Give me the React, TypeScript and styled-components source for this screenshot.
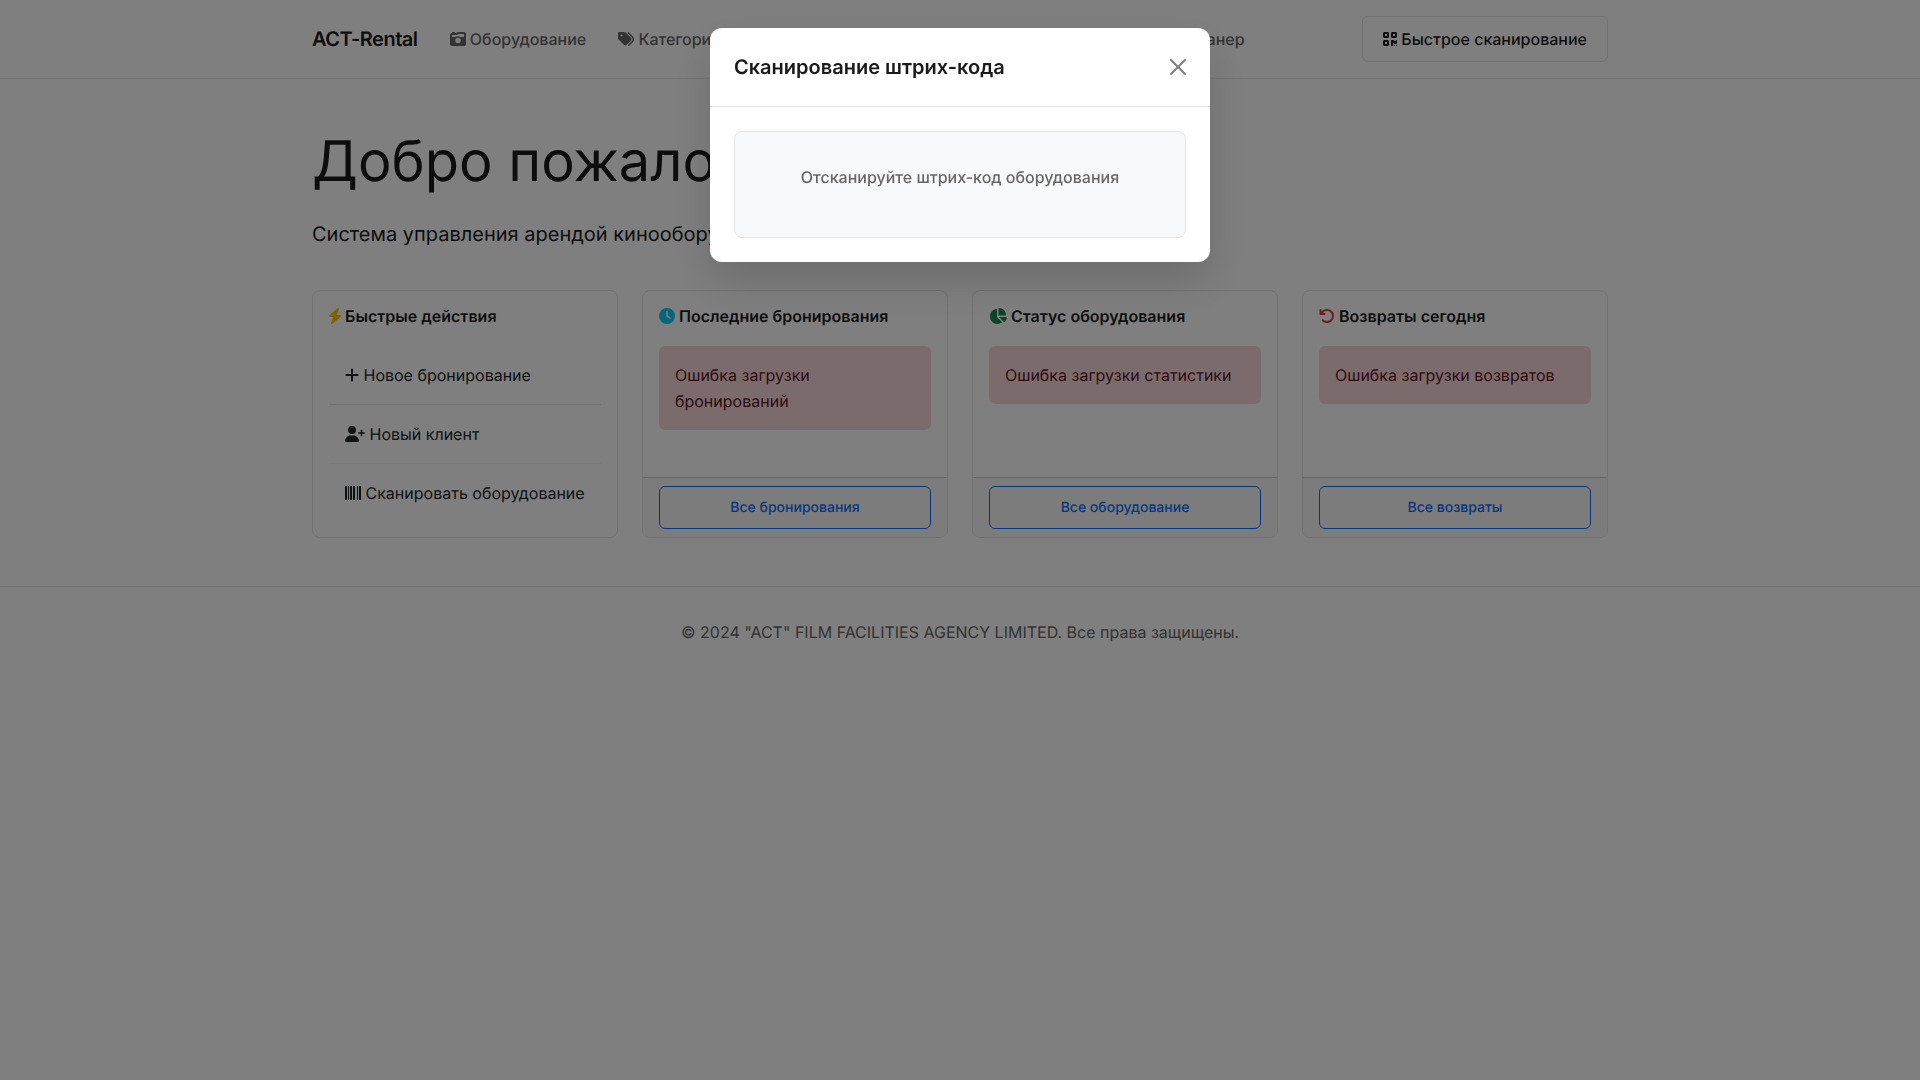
import React from "react";
import styled, { createGlobalStyle } from "styled-components";
import {
  FaArrowRotateLeft,
  FaBarcode,
  FaBolt,
  FaCalendar,
  FaCameraRetro,
  FaChartPie,
  FaClock,
  FaFolder,
  FaPlus,
  FaQrcode,
  FaTags,
  FaUserPlus,
  FaUsers,
} from "react-icons/fa6";
import type { IconType } from "react-icons";

const GlobalStyle = createGlobalStyle`
  *, *::before, *::after { box-sizing: border-box; }
  body {
    margin: 0;
    background: #fff;
    color: #1a1a1a;
    font-family: Inter, "Noto Sans", sans-serif;
    font-size: 16px;
    line-height: 26px;
    text-rendering: geometricPrecision;
    -webkit-font-smoothing: antialiased;
  }
  h1, h2, p { margin: 0; }
  a { color: inherit; text-decoration: none; }
  button { font: inherit; color: inherit; cursor: pointer; text-rendering: inherit; }
`;

const Glyph = styled.span<{ $width: number; $color?: string }>`
  color: ${(p) => p.$color ?? "inherit"};
  svg {
    width: ${(p) => p.$width}px;
    height: 16px;
    vertical-align: -2px;
  }
`;

const Container = styled.div`
  width: 100%;
  max-width: 1320px;
  margin: 0 auto;
  padding: 0 12px;
`;

const Navbar = styled.header`
  padding: 16px 0;
  border-bottom: 1px solid #e5e5e5;
`;

const NavRow = styled(Container)`
  display: flex;
  align-items: center;
`;

const Brand = styled.a`
  margin-right: 16px;
  font-size: 20px;
  font-weight: 600;
  letter-spacing: -0.5px;
`;

const NavList = styled.nav`
  display: flex;
  flex: 1;
`;

const NavLink = styled.a`
  padding: 8px 16px;
  color: #666;
  font-weight: 500;
  white-space: nowrap;
`;

const ScanButton = styled.button`
  padding: 9px 20px;
  border: 1px solid #e5e5e5;
  border-radius: 6px;
  background: transparent;
  font-weight: 500;
  white-space: nowrap;
`;

const Main = styled(Container).attrs({ as: "main" })`
  padding-top: 48px;
  padding-bottom: 48px;
`;

const Title = styled.h1`
  margin-bottom: 22px;
  font-size: 56px;
  font-weight: 400;
  line-height: 69px;
`;

const Lead = styled.p`
  margin-bottom: 40px;
  font-size: 20px;
  line-height: 32px;
`;

const Cards = styled.div`
  display: grid;
  grid-template-columns: repeat(4, 1fr);
  gap: 24px;
`;

const Card = styled.section`
  display: flex;
  flex-direction: column;
  border: 1px solid #e5e5e5;
  border-radius: 8px;
  overflow: hidden;
`;

const CardBody = styled.div`
  flex: 1;
  padding: 16px 16px 15px;
`;

const CardTitle = styled.h2`
  margin-bottom: 20px;
  font-size: 16px;
  font-weight: 600;
  line-height: 19px;
`;

const CardFooter = styled.div`
  padding: 8px 16px;
  border-top: 1px solid #cfcfcf;
  background: #f8f8f8;
`;

const OutlineLink = styled.a`
  display: block;
  padding: 9px 16px;
  border: 1px solid #0d6efd;
  border-radius: 6px;
  color: #0d6efd;
  font-size: 14px;
  font-weight: 500;
  line-height: 23px;
  text-align: center;
`;

const Alert = styled.div`
  padding: 16px;
  border-radius: 6px;
  background: #f8d7da;
  color: #58151c;
`;

const ActionLink = styled.a<{ $line?: string }>`
  display: block;
  padding: 16px;
  border-bottom: ${(p) => (p.$line ? `1px solid ${p.$line}` : "none")};
  color: #212529;
  white-space: nowrap;
`;

const Footer = styled.footer`
  padding: 32px 0;
  border-top: 1px solid #e5e5e5;
  color: #666;
  text-align: center;
`;

const Backdrop = styled.div`
  position: fixed;
  inset: 0;
  background: rgba(0, 0, 0, 0.5);
`;

const Dialog = styled.div`
  width: 100%;
  max-width: 500px;
  margin: 28px auto;
  border-radius: 12px;
  background: #fff;
  box-shadow: 0 20px 40px rgba(0, 0, 0, 0.15);
`;

const DialogHeader = styled.div`
  display: flex;
  align-items: center;
  justify-content: space-between;
  padding: 24px;
  border-bottom: 1px solid #e5e5e5;
`;

const DialogTitle = styled.h2`
  font-size: 20px;
  font-weight: 600;
  line-height: 30px;
`;

const CloseButton = styled.button`
  display: flex;
  padding: 0;
  border: 0;
  background: none;
  color: #000;
  opacity: 0.5;
`;

const DialogBody = styled.div`
  padding: 24px;
`;

const ScanBox = styled.div`
  padding: 32px 32px 31px;
  border: 1px solid #e5e5e5;
  border-radius: 8px;
  background: #f8f9fa;
  color: #666;
  font-weight: 500;
  text-align: center;

  p {
    margin-bottom: 16px;
  }
`;

type IconSpec = { shape: IconType; width: number; viewBox?: string };

const icons = {
  bolt: { shape: FaBolt, width: 12, viewBox: "32 0 384 512" },
  plus: { shape: FaPlus, width: 14 },
  qrcode: { shape: FaQrcode, width: 14 },
  calendar: { shape: FaCalendar, width: 14 },
  camera: { shape: FaCameraRetro, width: 16 },
  tags: { shape: FaTags, width: 16 },
  folder: { shape: FaFolder, width: 16 },
  barcode: { shape: FaBarcode, width: 16 },
  clock: { shape: FaClock, width: 16 },
  undo: { shape: FaArrowRotateLeft, width: 16 },
  chart: { shape: FaChartPie, width: 18 },
  users: { shape: FaUsers, width: 20 },
  userPlus: { shape: FaUserPlus, width: 20 },
} satisfies Record<string, IconSpec>;

type IconName = keyof typeof icons;

function Icon({ name, color }: { name: IconName; color?: string }) {
  const { shape: Shape, width, viewBox }: IconSpec = icons[name];
  return (
    <>
      <Glyph $width={width} $color={color} aria-hidden="true">
        {viewBox ? <Shape viewBox={viewBox} /> : <Shape />}
      </Glyph>{" "}
    </>
  );
}

const navItems: { icon: IconName; label: string }[] = [
  { icon: "camera", label: "Оборудование" },
  { icon: "tags", label: "Категории" },
  { icon: "users", label: "Клиенты" },
  { icon: "folder", label: "Проекты" },
  { icon: "calendar", label: "Бронирования" },
  { icon: "barcode", label: "Сканер" },
];

const actions: { icon: IconName; label: string; line?: string }[] = [
  { icon: "plus", label: "Новое бронирование", line: "#dedede" },
  { icon: "userPlus", label: "Новый клиент", line: "#f1f1f1" },
  { icon: "barcode", label: "Сканировать оборудование" },
];

const panels: {
  icon: IconName;
  color: string;
  title: string;
  error: string;
  link: string;
}[] = [
  {
    icon: "clock",
    color: "#0dcaf0",
    title: "Последние бронирования",
    error: "Ошибка загрузки бронирований",
    link: "Все бронирования",
  },
  {
    icon: "chart",
    color: "#198754",
    title: "Статус оборудования",
    error: "Ошибка загрузки статистики",
    link: "Все оборудование",
  },
  {
    icon: "undo",
    color: "#dc3545",
    title: "Возвраты сегодня",
    error: "Ошибка загрузки возвратов",
    link: "Все возвраты",
  },
];

export default function App() {
  const [open, setOpen] = React.useState(true);

  return (
    <>
      <GlobalStyle />
      <Navbar>
        <NavRow>
          <Brand href="#">ACT-Rental</Brand>
          <NavList>
            {navItems.map((item) => (
              <NavLink href="#" key={item.label}>
                <Icon name={item.icon} />
                {item.label}
              </NavLink>
            ))}
          </NavList>
          <ScanButton type="button" onClick={() => setOpen(true)}>
            <Icon name="qrcode" />
            Быстрое сканирование
          </ScanButton>
        </NavRow>
      </Navbar>

      <Main>
        <Title>Добро пожаловать</Title>
        <Lead>Система управления арендой кинооборудования</Lead>
        <Cards>
          <Card>
            <CardBody>
              <CardTitle>
                <Icon name="bolt" color="#ffc107" />
                Быстрые действия
              </CardTitle>
              {actions.map((action) => (
                <ActionLink href="#" key={action.label} $line={action.line}>
                  <Icon name={action.icon} />
                  {action.label}
                </ActionLink>
              ))}
            </CardBody>
          </Card>
          {panels.map((panel) => (
            <Card key={panel.title}>
              <CardBody>
                <CardTitle>
                  <Icon name={panel.icon} color={panel.color} />
                  {panel.title}
                </CardTitle>
                <Alert role="alert">{panel.error}</Alert>
              </CardBody>
              <CardFooter>
                <OutlineLink href="#">{panel.link}</OutlineLink>
              </CardFooter>
            </Card>
          ))}
        </Cards>
      </Main>

      <Footer>
        <Container>
          © 2024 "ACT" FILM FACILITIES AGENCY LIMITED. Все права защищены.
        </Container>
      </Footer>

      {open && (
        <Backdrop>
          <Dialog role="dialog" aria-modal="true" aria-labelledby="scan-title">
            <DialogHeader>
              <DialogTitle id="scan-title">Сканирование штрих-кода</DialogTitle>
              <CloseButton
                type="button"
                aria-label="Закрыть"
                onClick={() => setOpen(false)}
              >
                <svg width="16" height="16" viewBox="0 0 16 16" fill="currentColor">
                  <path d="M.293.293a1 1 0 0 1 1.414 0L8 6.586 14.293.293a1 1 0 1 1 1.414 1.414L9.414 8l6.293 6.293a1 1 0 0 1-1.414 1.414L8 9.414l-6.293 6.293a1 1 0 0 1-1.414-1.414L6.586 8 .293 1.707a1 1 0 0 1 0-1.414z" />
                </svg>
              </CloseButton>
            </DialogHeader>
            <DialogBody>
              <ScanBox>
                <p>Отсканируйте штрих-код оборудования</p>
              </ScanBox>
            </DialogBody>
          </Dialog>
        </Backdrop>
      )}
    </>
  );
}
